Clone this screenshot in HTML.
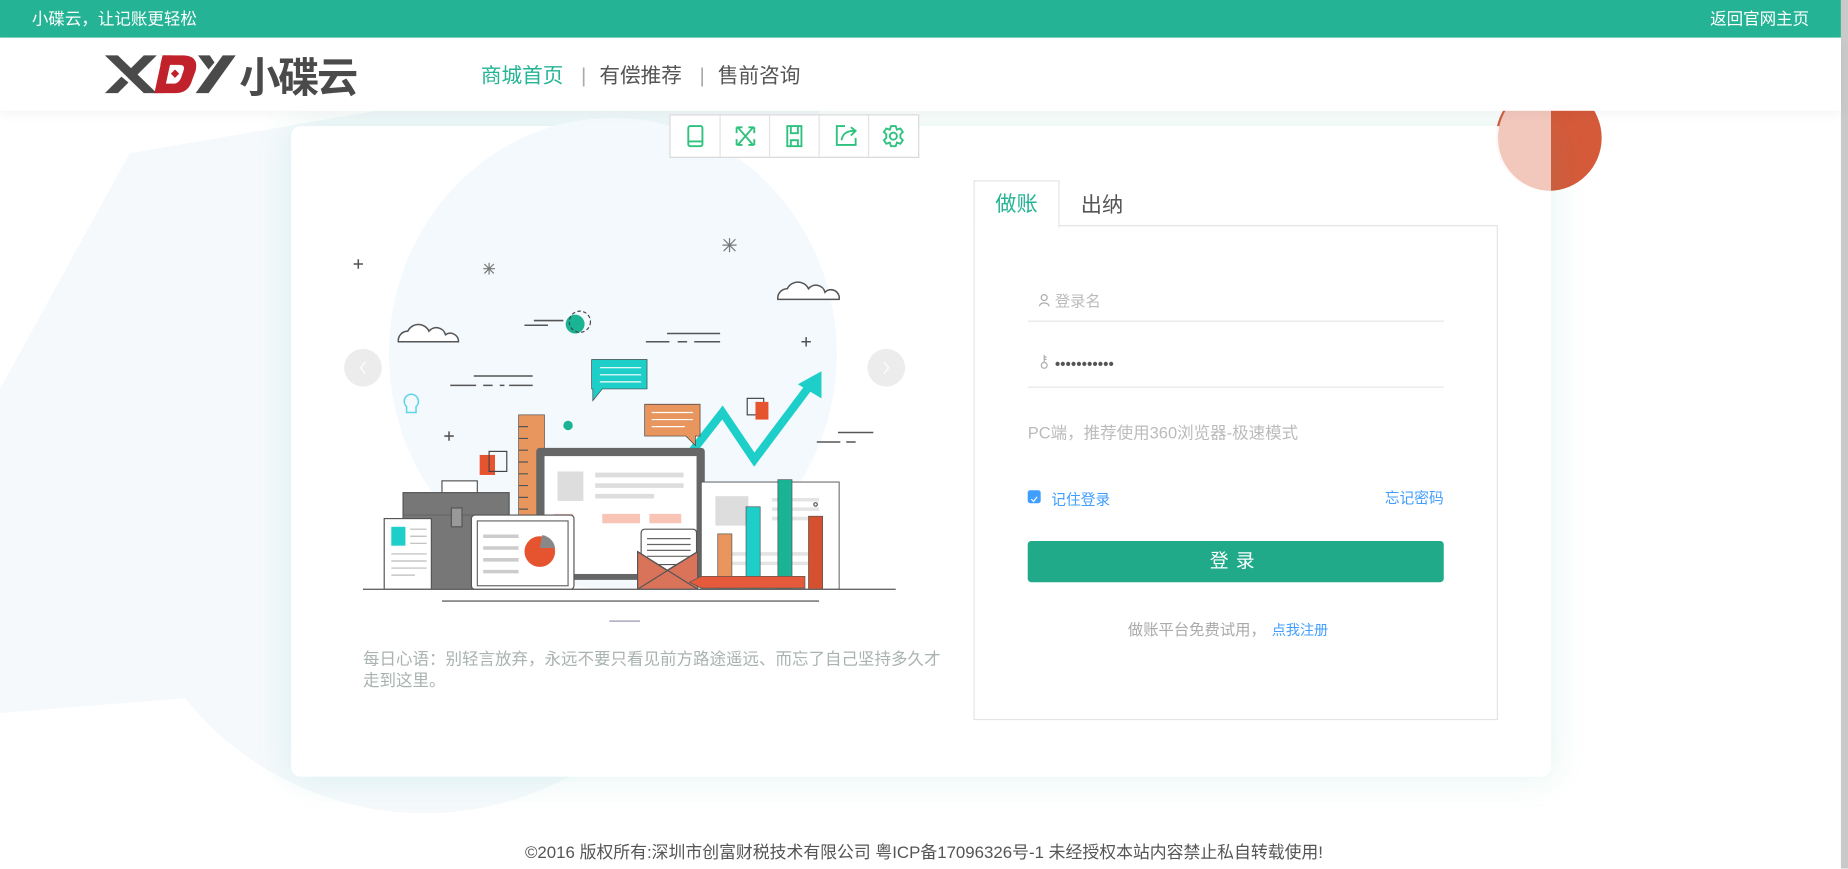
<!DOCTYPE html>
<html><head><meta charset="utf-8"><style>
html,body{margin:0;padding:0;width:1848px;height:868px;overflow:hidden;background:#fff;font-family:"Liberation Sans","Noto Sans CJK SC",sans-serif}
#w{position:absolute;left:0;top:0;width:1568px;height:737px;transform:scale(1.17857);transform-origin:0 0;overflow:hidden;background:#fff}
.a{position:absolute}
</style></head><body><div id="w">
<!-- background shapes -->
<svg class="a" style="left:0;top:0" width="1568" height="737">
<path d="M0 605 L0 330 L110 130 L400 80 L700 80 L560 560 Z" fill="#f5f9fc"/>
<circle cx="360" cy="430" r="260" fill="#f5f9fc"/>
<circle cx="1314" cy="117" r="45" fill="#d55a3a"/>
</svg>
<!-- top bar -->
<div class="a" style="left:0;top:0;width:1562px;height:32px;background:#24b394;color:#fff;font-size:14px;line-height:32px">
<span class="a" style="left:27px">小碟云，让记账更轻松</span>
<span class="a" style="right:27px">返回官网主页</span></div>
<div class="a" style="left:1562px;top:0;width:6px;height:737px;background:#c9c9c9"></div>
<!-- header -->
<div class="a" style="left:0;top:32px;width:1562px;height:62px;background:#fff;box-shadow:0 4px 8px rgba(0,0,0,.04);z-index:2">
<svg class="a" style="left:89px;top:14px" width="230" height="36" viewBox="0 0 230 36">
<g fill="#4a4a4a">
<path d="M0 1h11l33 32H33z"/><path d="M33 1h11L27 18l-6-5z"/><path d="M0 33h11l9-9-6-5z"/>
<path d="M100 1h11L88 33H77z"/><path d="M79 1h10l4 6-5 6z"/>
</g>
<path d="M49 1H66Q80 1 77 14L74 22Q71 33 60 33H42L46 25H58Q63 25 65 19L67 13Q68 9 63 9H47Z" fill="#c0212a"/>
<path d="M42 33L49 1H57L50 33Z" fill="#c0212a"/>
<rect x="57" y="14" width="5" height="5" transform="rotate(45 59.5 16.5)" fill="#c0212a"/>
<text x="114" y="32" font-size="35" fill="#4a4a4a" font-family="Noto Sans CJK SC" font-weight="bold" letter-spacing="-2">小碟云</text>
</svg>
<div class="a" style="left:408px;top:19px;font-size:17.5px;color:#555;white-space:nowrap"><span style="color:#24b394">商城首页</span><span style="color:#aaa;margin:0 11px 0 15px">|</span>有偿推荐<span style="color:#aaa;margin:0 11px 0 15px">|</span>售前咨询</div>
</div>
<!-- card -->
<div class="a" style="left:247px;top:107px;width:1069px;height:552px;background:rgba(255,255,255,.96);border-radius:8px;box-shadow:0 0 30px rgba(40,180,150,.14)"></div>
<svg class="a" style="left:0;top:0" width="1568" height="737">
<path d="M1316 72 A45 45 0 0 0 1316 162 Z" fill="#f2c8bd"/>
<ellipse cx="520" cy="300" rx="190" ry="200" fill="#f4f9fd"/>
<circle cx="308" cy="312" r="16" fill="#ececec"/><path d="M310 307l-4 5 4 5" stroke="#fff" fill="none"/>
<circle cx="752" cy="312" r="16" fill="#ececec"/><path d="M750 307l4 5-4 5" stroke="#fff" fill="none"/>
<g stroke="#555" stroke-width="1.3" fill="none">
<path d="M300 224h8M304 220v8M377 370h8M381 366v8M680 290h8M684 286v8"/>
<path d="M338 290a8 8 0 0 1 8-9a10 10 0 0 1 18 0a8 8 0 0 1 14 3a7 7 0 0 1 11 6zM660 254a8 8 0 0 1 8-9a10 10 0 0 1 18 0a8 8 0 0 1 14 3a7 7 0 0 1 12 6z" fill="#fff"/>
<path d="M410 228l10 0M415 223v10M411 224l8 8M419 224l-8 8M613 208h12M619 202v12M614 203l10 10M624 203l-10 10" stroke="#777" stroke-width="1"/>
<path d="M445 276h20M453 272h25M382 327h22M410 327h8M424 327h4M432 327h20M402 319h50M548 290h20M575 290h8M589 290h22M566 283h45M693 375h20M718 375h8M711 367h30"/>
</g>
<circle cx="488" cy="275" r="8" fill="#1ab394"/><circle cx="492" cy="273" r="9" fill="none" stroke="#444" stroke-dasharray="3 2"/>
<circle cx="482" cy="361" r="4" fill="#1ab394"/>
<path d="M345 345a6 6 0 1 1 8 0v5h-8z" fill="none" stroke="#5fd5e6" stroke-width="1.3"/>
<rect x="407" y="386" width="13" height="17" fill="#e5532f"/><rect x="415" y="383" width="15" height="17" fill="none" stroke="#444"/>
<rect x="634" y="338" width="14" height="14" fill="none" stroke="#444"/><rect x="641" y="341" width="11" height="15" fill="#e5532f"/>
<path d="M588 382 L613 350 L640 390 L685 330" stroke="#1ecfc9" stroke-width="7" fill="none"/>
<path d="M677 326 L697 315 L697 338 Z" fill="#1ecfc9"/>
<path d="M502 305h47v25h-38l-8 10v-10h-1z" fill="#1ecfc9" stroke="#444" stroke-width=".6"/>
<path d="M509 312h35M509 318h35M509 324h35" stroke="#fff"/>
<path d="M547 343h47v27h-4v8l-8-8h-35z" fill="#e8965e" stroke="#444" stroke-width=".6"/>
<path d="M553 350h35M553 356h35M553 362h28" stroke="#fff"/>
<rect x="440" y="352" width="22" height="90" fill="#e8965e" stroke="#555" stroke-width=".6"/>
<path d="M440 362h8M440 372h8M440 382h8M440 392h8M440 402h8M440 412h8M440 422h8M440 432h8" stroke="#555"/>
<rect x="455" y="380" width="143" height="112" rx="3" fill="#666"/>
<rect x="462" y="387" width="129" height="100" fill="#fff"/>
<rect x="473" y="400" width="22" height="25" fill="#ddd"/>
<path d="M505 403h75M505 412h75M505 421h50" stroke="#ddd" stroke-width="4"/>
<path d="M470 440h16M511 440h32M551 440h27" stroke="#f7c4b6" stroke-width="8"/>
<rect x="375" y="408" width="30" height="12" fill="#fff" stroke="#555"/>
<rect x="342" y="418" width="90" height="82" fill="#777" stroke="#555"/>
<path d="M342 437h90" stroke="#666"/>
<rect x="383" y="431" width="9" height="16" fill="#999" stroke="#555"/>
<rect x="326" y="440" width="40" height="60" fill="#fff" stroke="#555"/>
<rect x="332" y="447" width="12" height="16" fill="#1ecfc9"/>
<path d="M348 449h14M348 455h14M348 461h14M332 470h30M332 476h30M332 482h30M332 488h20" stroke="#bbb"/>
<rect x="400" y="437" width="87" height="63" rx="3" fill="#fff" stroke="#555"/>
<rect x="405" y="442" width="77" height="55" fill="#fff" stroke="#666"/>
<path d="M410 455h30M410 465h30M410 475h30M410 485h30" stroke="#ccc" stroke-width="3"/>
<circle cx="458" cy="468" r="13" fill="#e5532f"/><path d="M460 454a13 13 0 0 1 11 11h-13z" fill="#888"/>
<rect x="595" y="409" width="117" height="91" fill="#fff" stroke="#555" stroke-width=".8"/>
<rect x="607" y="421" width="28" height="25" fill="#ddd"/>
<path d="M655 424h40M655 432h40M655 440h40M620 470h75M620 478h75" stroke="#e4e4e4" stroke-width="3"/>
<rect x="609" y="453" width="12" height="47" fill="#e8965e" stroke="#555" stroke-width=".6"/>
<rect x="633" y="430" width="12" height="70" fill="#1ecfc9" stroke="#555" stroke-width=".6"/>
<rect x="660" y="407" width="12" height="93" fill="#1ab394" stroke="#555" stroke-width=".6"/>
<rect x="686" y="438" width="12" height="62" fill="#d4502e" stroke="#555" stroke-width=".6"/>
<circle cx="692" cy="428" r="1.5" fill="none" stroke="#555"/>
<rect x="544" y="449" width="47" height="30" rx="3" fill="#fff" stroke="#555"/>
<path d="M549 457h37M549 462h37M549 467h37M549 472h37" stroke="#666"/>
<path d="M541 468l25 16 26-16v32h-51z" fill="#d9735a" stroke="#555"/>
<path d="M541 500l51-32M592 500l-51-32" stroke="#555"/>
<path d="M585 494l10-5h88v10h-88z" fill="#e55a3a" stroke="#555" stroke-width=".6"/>
<path d="M308 500h452M375 510h320" stroke="#666" stroke-width="1.2"/>
<path d="M517 527h26" stroke="#aab" stroke-width="1.2"/>
</svg>
<div class="a" style="left:308px;top:550px;width:498px;font-size:14px;line-height:18px;color:#a9b3b0">每日心语：别轻言放弃，永远不要只看见前方路途遥远、而忘了自己坚持多久才走到这里。</div>
<div class="a" style="left:568px;top:97px;width:210px;height:35px;border:1px solid #d8d8d8;background:#fff;z-index:3">
<svg width="210" height="35" viewBox="0 0 210 35"><g stroke="#e2e2e2"><path d="M42 0v35M84 0v35M126 0v35M168 0v35"/></g>
<g stroke="#2ec27e" stroke-width="1.6" fill="none">
<rect x="15" y="9" width="12" height="17" rx="1.5"/><path d="M15 22h12"/>
<path d="M57 10l13 15M70 10l-13 15M56 10h5M56 10v5M71 10h-5M71 10v5M56 25h5M56 25v-5M71 25h-5M71 25v-5"/>
<path d="M99 9h12v17h-12zM102 9v6h6v-6M102 26v-5h6v5"/>
<path d="M148 9h-7v16h16v-6M145 21c1-6 5-8 11-8M153 10l4 3-4 4"/>
<circle cx="189" cy="17.5" r="3"/><path d="M187 9h4l1 3 3-1 2 3-2 2v3l2 2-2 3-3-1-1 3h-4l-1-3-3 1-2-3 2-2v-3l-2-2 2-3 3 1z"/>
</g></svg></div>
<div class="a" style="left:826px;top:191px;width:443px;height:418px;border:1px solid #e4e4e4;background:#fff"></div>
<div class="a" style="left:826px;top:153px;width:71px;height:39px;border:1px solid #e4e4e4;border-bottom:none;background:#fff;color:#24b394;font-size:18px;line-height:38px;text-align:center">做账</div>
<div class="a" style="left:917px;top:160px;font-size:18px;color:#555">出纳</div>
<div class="a" style="left:872px;top:245px;width:353px;height:27px;border-bottom:1px solid #e6e6e6;font-size:13px;color:#bbb">
<svg width="10" height="11" style="margin:0 4px 0 9px"><circle cx="5" cy="3.5" r="2.5" fill="none" stroke="#aaa"/><path d="M1 11c0-4 8-4 8 0" fill="none" stroke="#aaa"/></svg>登录名</div>
<div class="a" style="left:872px;top:301px;width:353px;height:27px;border-bottom:1px solid #e6e6e6;font-size:13px;color:#555">
<svg width="10" height="12" style="margin:0 4px 0 9px"><circle cx="5" cy="9" r="2.5" fill="none" stroke="#aaa"/><path d="M5 0v6M5 2h2M5 4h2" stroke="#aaa"/></svg>•••••••••••</div>
<div class="a" style="left:872px;top:357px;font-size:14px;color:#bbb">PC端，推荐使用360浏览器-极速模式</div>
<div class="a" style="left:872px;top:416px;width:11px;height:11px;border-radius:2px;background:#409eff"><svg width="11" height="11"><path d="M3 5.5l2 2 3-4" stroke="#fff" fill="none"/></svg></div>
<div class="a" style="left:892px;top:413px;font-size:12.5px;color:#409eff">记住登录</div>
<div class="a" style="left:1175px;top:412px;font-size:12.5px;color:#409eff">忘记密码</div>
<div class="a" style="left:872px;top:459px;width:353px;height:35px;border-radius:3px;background:#20aa8a;color:#fff;font-size:16px;line-height:35px;text-align:center;letter-spacing:6px">登录</div>
<div class="a" style="left:957px;top:524px;font-size:13px;color:#aaa">做账平台免费试用，<span style="color:#409eff;font-size:12px;margin-left:5px">点我注册</span></div>
<div class="a" style="left:0;top:712px;width:1568px;text-align:center;font-size:14.3px;color:#555">©2016 版权所有:深圳市创富财税技术有限公司 粤ICP备17096326号-1 未经授权本站内容禁止私自转载使用!</div>
</div></body></html>
